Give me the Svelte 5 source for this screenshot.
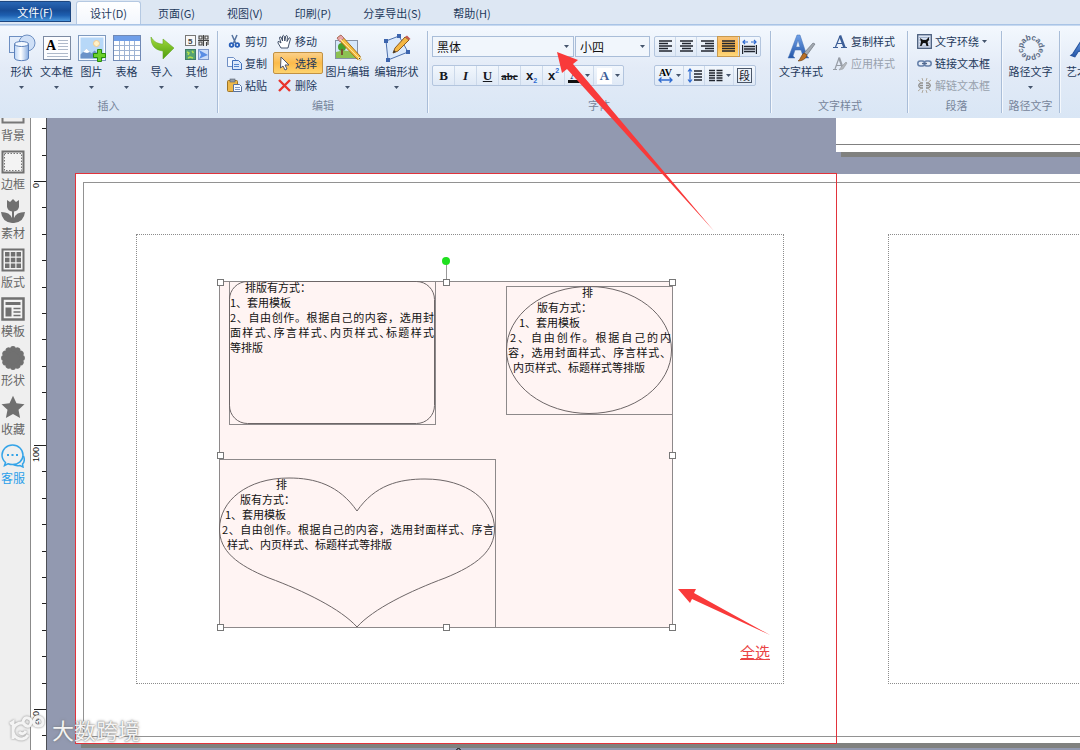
<script>
  const tabs = ['页面(G)', '视图(V)', '印刷(P)', '分享导出(S)', '帮助(H)'];

  const insertItems = [
    { id: 'shape', label: '形状' },
    { id: 'textbox', label: '文本框' },
    { id: 'picture', label: '图片' },
    { id: 'table', label: '表格' },
    { id: 'import', label: '导入' },
    { id: 'other', label: '其他' }
  ];

  const sideItems = [
    { id: 'background', label: '背景' },
    { id: 'border', label: '边框' },
    { id: 'material', label: '素材' },
    { id: 'layout', label: '版式' },
    { id: 'template', label: '模板' },
    { id: 'badge', label: '形状' },
    { id: 'star', label: '收藏' },
    { id: 'service', label: '客服', accent: true }
  ];

  // Ruler: one tick every 10 mm, a long one with a number every 100 mm.
  let rulerHeight = $state(632);
  const ticks = $derived(
    Array.from({ length: Math.ceil(rulerHeight / 26.4) }, (_, i) => {
      const n = i - 2;
      return { y: Math.round(63 + n * 26.4), major: n % 10 === 0, value: n * 10 };
    })
  );

  const handles = [
    [0, 0], [50, 0], [100, 0],
    [0, 50], [100, 50],
    [0, 100], [50, 100], [100, 100]
  ];

  const blocks = [
    {
      kind: 'rounded',
      lines: [
        { text: '排版有方式：', indent: 15 },
        { text: '1、套用模板', indent: 0 },
        { text: '2、自由创作。根据自己的内容，选用封', indent: 0, fill: true },
        { text: '面样式、序言样式、内页样式、标题样式', indent: 0, fill: true, tight: true },
        { text: '等排版', indent: 0 }
      ]
    },
    {
      kind: 'ellipse',
      lines: [
        { text: '排', indent: 75 },
        { text: '版有方式：', indent: 30 },
        { text: '1、套用模板', indent: 12 },
        { text: '2、自由创作。根据自己的内', indent: 3, fill: true },
        { text: '容，选用封面样式、序言样式、', indent: 1, fill: true },
        { text: '内页样式、标题样式等排版', indent: 6 }
      ]
    },
    {
      kind: 'heart',
      lines: [
        { text: '排', indent: 56 },
        { text: '版有方式：', indent: 20 },
        { text: '1、套用模板', indent: 5 },
        { text: '2、自由创作。根据自己的内容，选用封面样式、序言', indent: 2, fill: true },
        { text: '样式、内页样式、标题样式等排版', indent: 7 }
      ]
    }
  ];

  const ringLetters = 'abcadecpdecp'.split('');
  const petals = Array.from({ length: 12 }, (_, i) => i * 30);
</script>

{#snippet caret()}
  <svg class="caret" viewBox="0 0 5 3" aria-hidden="true"><path d="M0 0h5L2.500 3z" fill="#44546c" /></svg>
{/snippet}

{#snippet bigIcon(id)}
  <svg class="big-icon" viewBox="0 0 28 28" aria-hidden="true">
    <defs>
      <linearGradient id="glass" x1="0" x2="1"><stop offset="0" stop-color="#b9d3f5" /><stop offset=".45" stop-color="#fff" /><stop offset="1" stop-color="#86abe0" /></linearGradient>
      <linearGradient id="leaf" x2="0" y2="1"><stop stop-color="#a5dc3c" /><stop offset="1" stop-color="#4b9c0d" /></linearGradient>
      <linearGradient id="glyph" x2="0" y2="1"><stop stop-color="#6fa0e8" /><stop offset="1" stop-color="#2456a8" /></linearGradient>
    </defs>
    {#if id === 'shape'}
      <rect x="1.500" y="2.500" width="15" height="16" fill="#e3edfb" stroke="#6d8fc2" />
      <circle cx="19" cy="9" r="8" fill="#cfe0f7" stroke="#6d8fc2" />
      <path d="M6.500 10v14c0 3.500 14 3.500 14 0V10z" fill="url(#glass)" stroke="#5d82bb" />
      <ellipse cx="13.500" cy="10" rx="7" ry="2.500" fill="#f4f9ff" stroke="#5d82bb" />
    {:else if id === 'textbox'}
      <rect x=".5" y="2.500" width="27" height="23" fill="#fcfdff" stroke="#7c8ba3" />
      <text x="3" y="16" font-family="Liberation Serif" font-weight="bold" font-size="14">A</text>
      <path d="M15 6.500h10M15 9.500h10M15 12.500h10M15 15.500h10M4 19.500h21M4 22.500h21" stroke="#aeb9ca" />
    {:else if id === 'picture'}
      <rect x=".5" y="1.500" width="27" height="25" fill="#f8fbff" stroke="#7f9abf" />
      <rect x="2.500" y="3.500" width="23" height="21" fill="#b7d8f8" />
      <circle cx="18.500" cy="9.500" r="3" fill="#fff1c7" stroke="#f3c98b" />
      <path d="M2.500 24.500v-4l6-6 5 5 3-3 9 8z" fill="#6c93c8" />
      <path d="M5 18l3.500-3.500L12 18l-3 1z" fill="#fff" />
      <path d="M19.500 15.500h4v4h4v4h-4v4h-4v-4h-4v-4h4z" fill="#6bd02b" stroke="#298b0b" />
    {:else if id === 'table'}
      <rect x=".5" y="1.500" width="27" height="25" fill="#fff" stroke="#7089b5" />
      <rect x="1" y="2" width="26" height="5" fill="#6f9ee8" />
      <path d="M1 11.500h26M1 16.500h26M1 21.500h26M6.500 7v19M11.500 7v19M16.500 7v19M21.500 7v19" stroke="#9eb3d3" />
    {:else if id === 'import'}
      <path d="M3 4C3 13 7 17 15 18v8l11-11L15 6v5C10 11 6 9 3 4z" transform="translate(0 -1)" fill="url(#leaf)" stroke="#67a92a" stroke-width=".6" />
    {:else if id === 'other'}
      <rect x="2.500" y="1.500" width="10" height="10" fill="#f8f8f8" stroke="#777" />
      <text x="5" y="10" font-family="Liberation Sans" font-weight="bold" font-size="8" fill="#444">5</text>
      <rect x="15.500" y="1.500" width="10" height="10" fill="#f2f2f2" />
      <path d="M16 2h3v3h-3zM22 2h3v3h-3zM16 8h3v3h-3zM20.500 1v11M15 6.500h11M23.500 8v4M25 7v4" stroke="#444" stroke-width="1.100" fill="none" />
      <rect x="2.500" y="15.500" width="10" height="10" fill="#55a273" stroke="#3f7d68" />
      <path d="M4 18l2 1-1 2M9 17l1.500 2M5 24l2-1 3 1" stroke="#b3df4d" stroke-width="1.500" fill="none" />
      <rect x="15.500" y="15.500" width="10" height="10" fill="#cbdcf8" stroke="#7d97c8" />
      <path d="M16 16l9 5-5 2-4 2 2-4z" fill="#5a8de4" />
    {:else if id === 'edit-picture'}
      <rect x="1.500" y="6.500" width="22" height="18" fill="#d5e8fb" stroke="#8592a5" />
      <path d="M2 24V18q10-4 21 2v4z" fill="#8cc152" />
      <circle cx="8" cy="13" r="4" fill="#47a12e" /><path d="M8 15v6" stroke="#7a5230" stroke-width="2" />
      <path d="M3 4l4-3 19 21 1 4-4-1z" fill="#f6bf43" stroke="#a36e1c" />
      <path d="M3 4l4-3 3 3-4 4z" fill="#e8a5a8" stroke="#a6696b" stroke-width=".7" />
      <path d="M6 5l19 19M24 25l2-2 1 3z" stroke="#fbe4a0" fill="#333" />
    {:else if id === 'edit-shape'}
      <path d="M3 7l13-5 9 16-20 8z" fill="#dbe9fb" stroke="#4d70ad" />
      <path d="M1 5h4v4H1zM14 0h4v4h-4zM23 16h4v4h-4zM3 24h4v4H3z" fill="#3d65ae" />
      <path d="M22 3l4 3-11 11-5 2 2-5z" fill="#f4b744" stroke="#8a5b22" /><path d="M22 3l2-1.500L27.500 5 26 6z" fill="#c45a50" /><path d="M10 19l1-3 2 2z" fill="#333" />
    {:else if id === 'text-style'}
      <path d="M1 24l1-2 8-21h3l7 21 2 2H14l2-2-2-6H8l-2 6 2 2zM9 13h4l-2-7z" fill="url(#glyph)" stroke="#4470b2" stroke-width=".5" />
      <path d="M26 9l2 1-8 11-3-2z" fill="#a3a9b1" stroke="#5f6670" stroke-width=".6" /><path d="M17 19l3 2c-1 4-5 6-9 6 3-2 3-6 6-8z" fill="#b97025" stroke="#6b3e13" stroke-width=".6" />
    {:else if id === 'path-text'}
      {#each ringLetters as c, i}
        <text x="14" y="6" text-anchor="middle" font-family="Liberation Sans" font-weight="bold" font-size="8" fill="#5b6b84" transform="rotate({i * 30 - 45} 14 14)">{c}</text>
      {/each}
    {:else if id === 'word-art'}
      <path d="M1 20l2-1L15 4l8 17h-8l-1-4H9l-4 5z" transform="rotate(-6 14 14)" fill="url(#glyph)" stroke="#28549e" />
    {/if}
  </svg>
{/snippet}

{#snippet smallIcon(id)}
  <svg class="small-icon" viewBox="0 0 15 15" aria-hidden="true">
    {#if id === 'cut'}
      <path d="M5 1l3.500 8M10 1L6.500 9" stroke="#56739f" stroke-width="1.500" fill="none" />
      <circle cx="4.500" cy="11" r="1.800" fill="none" stroke="#285fb9" stroke-width="1.800" /><circle cx="10.300" cy="11" r="1.800" fill="none" stroke="#285fb9" stroke-width="1.800" />
    {:else if id === 'copy'}
      <path d="M.5 1.500h6l2 2v7h-8z" fill="#f2f7ff" stroke="#6f8fc4" /><path d="M5.500 4.500h6l3 3v6h-9z" fill="#dbe8fb" stroke="#3f6db8" /><path d="M7 8.500h5M7 10.500h5" stroke="#5686cf" />
    {:else if id === 'paste'}
      <rect x=".5" y="2.500" width="10" height="11" rx="1" fill="#edb84b" stroke="#9d7426" /><rect x="3" y="1" width="5" height="3" fill="#8f99a8" stroke="#59616c" stroke-width=".6" /><path d="M6.500 6.500h6l2 2v5h-8z" fill="#f5f9ff" stroke="#56719e" /><path d="M8 9.500h5M8 11.500h5" stroke="#7f9bc7" />
    {:else if id === 'hand'}
      <path d="M4 14L1 9q-.5-2 1-1.500L4 9 2.500 4q0-1.500 1.500-1l1.500 4L5.500 2q.7-1.500 1.700 0l.6 5 1-5q1-1.200 1.700.3L10 7.500l2-3.500q1.300-.7 1.500.7L12 10l-1 4z" fill="#fff" stroke="#33435e" stroke-width=".9" />
    {:else if id === 'pointer'}
      <path d="M4 1l8 8H8l2 4-2 1-2-4-2.500 2z" fill="#fff" stroke="#4e566b" />
    {:else if id === 'delete'}
      <path d="M2 2l11 11M13 2L2 13" stroke="#e9352d" stroke-width="2.400" />
    {:else if id === 'copy-style'}
      <path d="M0 13.500h5M8 13.500h6M2.500 13L7 2M4.500 9.500h6" stroke="#3c5e97" stroke-width="1.200" fill="none" /><path d="M7 1.500l4.500 12" stroke="#3c5e97" stroke-width="2.400" />
    {:else if id === 'apply-style'}
      <path d="M0 13.500h4M2 13L6 2M3.500 9.500h5" stroke="#979da6" stroke-width="1.200" fill="none" /><path d="M6 1.500l3.500 10" stroke="#979da6" stroke-width="2.200" /><path d="M13 6l1 1-4 6-4 1 3-4z" fill="#b3b7bc" stroke="#969b9f" stroke-width=".6" />
    {:else if id === 'wrap'}
      <rect x=".7" y=".7" width="13.600" height="13.600" fill="#dae4f3" stroke="#4a5d7d" stroke-width="1.300" /><path d="M2 3.500h11M2 6h11M2 9h11M2 12h11" stroke="#8c9fbd" stroke-width=".7" /><path d="M3 4l3 2h3l3-3v3l-1.500 2 1 4h-2l-1-3H6l-1.500 3H3l1-4z" fill="#111" />
    {:else if id === 'link'}
      <rect x=".8" y="5" width="7" height="5" rx="2.500" fill="none" stroke="#647fa9" stroke-width="1.500" /><rect x="7.200" y="5" width="7" height="5" rx="2.500" fill="none" stroke="#647fa9" stroke-width="1.500" /><path d="M5 7.500h5" stroke="#52698e" stroke-width="1.300" />
    {:else if id === 'unlink'}
      <path d="M6 5H3.500q-3.500 2.500 0 5H6M9 5h2.500q3.500 2.500 0 5H9M3 7.500h3M9 7.500h3" stroke="#8f8e8c" stroke-width="1.400" fill="none" /><path d="M5 0l1 3M10 0L9 3M5 15l1-3M10 15l-1-3M1 2l2.500 2M14 2l-2.500 2M1 13l2.500-2M14 13l-2.500-2" stroke="#b0a99c" fill="none" />
    {/if}
  </svg>
{/snippet}

{#snippet big(id, label, drop = true)}
  <button class="big">{@render bigIcon(id)}<span>{label}</span>{#if drop}{@render caret()}{/if}</button>
{/snippet}

{#snippet small(id, label, cls = '', drop = false)}
  <button class="small {cls}">{@render smallIcon(id)}<span>{label}</span>{#if drop}{@render caret()}{/if}</button>
{/snippet}

{#snippet lines(d, blue = '')}
  <svg class="tool-icon" viewBox="0 0 15 15" aria-hidden="true"><path {d} stroke="#20252e" stroke-width="1.400" fill="none" />{#if blue}<path d={blue} stroke="#2f6bd0" stroke-width="1.200" fill="none" />{/if}</svg>
{/snippet}

<div class="window">
  <nav class="tabs">
    <button class="tab file">文件(F)</button>
    <button class="tab active">设计(D)</button>
    {#each tabs as t}<button class="tab">{t}</button>{/each}
  </nav>

  <div class="ribbon">
    <section class="group insert">
      <div class="tools">{#each insertItems as it}{@render big(it.id, it.label)}{/each}</div>
      <h2>插入</h2>
    </section>
    <section class="group edit">
      <div class="tools">
        <div class="stack">{@render small('cut', '剪切')}{@render small('copy', '复制')}{@render small('paste', '粘贴')}</div>
        <div class="stack">{@render small('hand', '移动')}{@render small('pointer', '选择', 'on')}{@render small('delete', '删除')}</div>
        {@render big('edit-picture', '图片编辑')}{@render big('edit-shape', '编辑形状')}
      </div>
      <h2>编辑</h2>
    </section>
    <section class="group font">
      <div class="tools">
        <div class="rows">
          <div class="row">
            <span class="pick name"><select aria-label="字体"><option>黑体</option></select>{@render caret()}</span>
            <span class="pick size"><select aria-label="字号"><option>小四</option></select>{@render caret()}</span>
          </div>
          <div class="strip">
            <button class="b">B</button><button class="i">I</button><button class="u">U</button><button class="s">abc</button>
            <button class="x">x<sub>2</sub></button><button class="x">x<sup>2</sup></button>
            <button class="wide"><span class="ink">A</span>{@render caret()}</button>
            <button class="wide"><span class="plate">A</span>{@render caret()}</button>
          </div>
        </div>
        <div class="rows narrow">
          <div class="strip">
            <button aria-label="左对齐">{@render lines('M1 2h13M1 4.500h9M1 7h13M1 9.500h9M1 12h13')}</button>
            <button aria-label="居中">{@render lines('M1 2h13M3 4.500h9M1 7h13M3 9.500h9M1 12h13')}</button>
            <button aria-label="右对齐">{@render lines('M1 2h13M5 4.500h9M1 7h13M5 9.500h9M1 12h13')}</button>
            <button class="on" aria-label="两端对齐">{@render lines('M1 2h13M1 4.500h13M1 7h13M1 9.500h13M1 12h13')}</button>
            <button aria-label="分散对齐">{@render lines('M.5 6v9M14.500 6v9M2 7.500h11M2 10h11M2 12.500h11', 'M1 3h5M3 1L1 3l2 2M9 3h5M12 1l2 2-2 2')}</button>
          </div>
          <div class="strip">
            <button class="wide"><svg class="tool-icon" viewBox="0 0 15 15" aria-hidden="true"><text x="7.500" y="8" text-anchor="middle" font-family="Liberation Serif" font-weight="bold" font-size="10">AV</text><path d="M1 12h13M3.500 9.500L1 12l2.500 2.500M11.500 9.500L14 12l-2.500 2.500" stroke="#2f6bd0" stroke-width="1.300" fill="none" /></svg>{@render caret()}</button>
            <button aria-label="行距">{@render lines('M7 3h8M7 6h8M7 9h8M7 12h8', 'M3 1v13M1 3.500L3 1l2 2.500M1 11.500L3 14l2-2.500')}</button>
            <button class="wide" aria-label="分栏">{@render lines('M1 2.500h6M1 5h6M1 7.500h6M1 10h6M1 12.500h6M8.500 2.500h6M8.500 5h6M8.500 7.500h6M8.500 10h6M8.500 12.500h6')}{@render caret()}</button>
            <button><span class="para">段</span></button>
          </div>
        </div>
      </div>
      <h2>字体</h2>
    </section>
    <section class="group style">
      <div class="tools">
        {@render big('text-style', '文字样式', false)}
        <div class="stack">{@render small('copy-style', '复制样式')}{@render small('apply-style', '应用样式', 'off')}</div>
      </div>
      <h2>文字样式</h2>
    </section>
    <section class="group paragraph">
      <div class="tools">
        <div class="stack">{@render small('wrap', '文字环绕', '', true)}{@render small('link', '链接文本框')}{@render small('unlink', '解链文本框', 'off')}</div>
      </div>
      <h2>段落</h2>
    </section>
    <section class="group path">
      <div class="tools">{@render big('path-text', '路径文字')}</div>
      <h2>路径文字</h2>
    </section>
    <section class="group art">
      <div class="tools">{@render big('word-art', '艺术字', false)}</div>
    </section>
  </div>

  <div class="body">
    <aside class="side">
      {#each sideItems as it}
        <button class:accent={it.accent}>
          <svg viewBox="0 0 24 24" aria-hidden="true">
            {#if it.id === 'background'}
              <rect x="1.500" y="1.500" width="21" height="20" fill="none" stroke="#777" stroke-width="2" />
            {:else if it.id === 'border'}
              <rect x="1.500" y="1.500" width="21" height="21" fill="#f3f3f3" stroke="#707070" stroke-width="2" /><rect x="3.500" y="3.500" width="17" height="17" fill="none" stroke="#777" stroke-dasharray="1.500 1.500" />
            {:else if it.id === 'material'}
              <path d="M6 1l3 2 3-3 3 3 3-2v7q-1 4-5 4.500V19q2-6 11-6-1 10-11 11h-2Q1 23 0 13q9 0 11 6v-6.500Q7 12 6 8z" fill="#707070" />
            {:else if it.id === 'layout'}
              <rect x="1.500" y="1.500" width="21" height="21" fill="#f3f3f3" stroke="#707070" stroke-width="2" /><path d="M4 4h4.500v4.500H4zM9.800 4h4.500v4.500H9.800zM15.500 4H20v4.500h-4.500zM4 9.800h4.500v4.500H4zM9.800 9.800h4.500v4.500H9.800zM15.500 9.800H20v4.500h-4.500zM4 15.500h4.500V20H4zM9.800 15.500h4.500V20H9.800zM15.500 15.500H20V20h-4.500z" fill="#707070" />
            {:else if it.id === 'template'}
              <rect x="1.500" y="1.500" width="21" height="21" fill="#f3f3f3" stroke="#707070" stroke-width="2.500" /><path d="M4.500 6.500h15" stroke="#707070" stroke-width="3" /><path d="M4.500 10.500h6v9h-6z" fill="#707070" /><path d="M12.500 11.500h7M12.500 15h7M12.500 18.500h7" stroke="#707070" stroke-width="1.700" />
            {:else if it.id === 'badge'}
              <circle cx="12" cy="12" r="10" fill="#707070" />
              {#each petals as a}<circle cx="12" cy="3" r="2.900" fill="#707070" transform="rotate({a} 12 12)" />{/each}
            {:else if it.id === 'star'}
              <path d="M12 .8l3.500 7.400 8 1-6 5.600 1.600 8.200-7.100-4-7.100 4 1.600-8.200-6-5.600 8-1z" fill="#707070" />
            {:else}
              <path d="M4.500 18.500l-1 3 3.500-1.700q2 .8 4.500.8C17.500 20.600 22 16.500 22 11S17.500 1 11.500 1 1 5.500 1 11q0 4.500 3.500 7.500z" fill="none" stroke="#35a4e8" stroke-width="1.500" /><path d="M22.500 12q2 5-1 8l.5 3-3-1.500q-4 1-7-1" fill="none" stroke="#35a4e8" stroke-width="1.500" /><path d="M6 10h2v2H6zM10.500 10h2v2h-2zM15 10h2v2h-2z" fill="#35a4e8" />
            {/if}
          </svg>
          <span>{it.label}</span>
        </button>
      {/each}
    </aside>

    <div class="ruler" bind:clientHeight={rulerHeight}>
      <svg aria-hidden="true">
        {#each ticks as t}
          <path d="M{t.major ? 3 : 11} {t.y + 0.5}H15" stroke="#222" />
          {#if t.major}<text transform="translate(8 {t.y + (t.value ? 17 : 7)}) rotate(-90)">{t.value}</text>{/if}
        {/each}
      </svg>
    </div>

    <main class="canvas">
      <div class="page upper"></div>
      <div class="page spread"></div>
      <div class="bleed"></div>
      <div class="outline"></div>
      <div class="guide first"></div>
      <div class="guide second"></div>

      <div class="selection">
        {#each blocks as b}
          <div class="block {b.kind}">
            <svg aria-hidden="true">
              {#if b.kind === 'rounded'}
                <rect x=".5" y=".5" width="205" height="142" rx="18" />
              {:else if b.kind === 'ellipse'}
                <ellipse cx="83" cy="64" rx="82.500" ry="63.500" />
              {:else}
                <path d="M138 52C120 26 96 19 70 19 28 19 .5 42 .5 70 .5 92 18 106 50 119 85 132 122 150 138 168 154 150 191 132 226 119 258 106 275.500 92 275.500 70 275.500 42 248 20 206 20 180 20 156 26 138 52z" />
              {/if}
            </svg>
            <div class="copy">
              {#each b.lines as l}<p class:fill={l.fill} class:tight={l.tight} style:padding-left="{l.indent}px">{l.text}</p>{/each}
            </div>
          </div>
        {/each}
        <div class="stem"></div>
        {#each handles as [x, y]}<i class="handle" style="left:{x}%;top:{y}%"></i>{/each}
      </div>

      <p class="note">全选</p>
      <i class="origin"></i>
    </main>
  </div>

  <svg class="arrows" aria-hidden="true">
    <path d="M557 52L578 60 573 64 714 231 567 69 562 73z" />
    <path d="M678 589L696 589 694 593 770 635 692 599 690 603z" />
  </svg>

  <div class="mark">
    <svg viewBox="0 0 38 28" aria-hidden="true"><path d="M2 9l3-2v17M17 9a8 8 0 1 0 3 11M11 17q4 4 7-1M15 7q1-5 5-4t3 5-4 3-3-3M26 6q1-5 5-4t4 5-5 4-4-5z" /></svg>
    <span>大数跨境</span>
  </div>
</div>

<style>
  :global(body) { margin: 0; }
  .window {
    position: relative;
    display: flex;
    flex-direction: column;
    height: 100vh;
    overflow: hidden;
    font: 11px/18px "Noto Sans CJK SC", sans-serif;
    color: #1e395b;
  }
  button { font: inherit; color: inherit; border: 0; padding: 0; margin: 0; background: none; }
  h2, p { margin: 0; font-weight: normal; }

  .tabs {
    display: flex;
    flex: none;
    height: 24px;
    background: #dde7f3;
    border-bottom: 1px solid #a9c4e6;
  }
  .tab { padding: 2px 16px 0; white-space: nowrap; line-height: 20px; }
  .tab.file {
    width: 71px;
    margin: 1px 5px 2px 0;
    padding: 0;
    color: #fff;
    border-radius: 0 2px 0 0;
    background: linear-gradient(#2a67b4, #174c96 45%, #1d5fb0 70%, #4c98dd);
    border: 1px solid #1c4680;
    border-left: 0;
    line-height: 18px;
  }
  .tab.active {
    margin: 1px 1px 0 0;
    padding: 0 13px;
    background: linear-gradient(#fff, #f3f7fd);
    border: 1px solid #b5c9e2;
    border-bottom: 0;
    border-radius: 3px 3px 0 0;
  }

  .ribbon {
    display: flex;
    flex: none;
    height: 82px;
    padding: 5px 0;
    overflow: hidden;
    background: linear-gradient(#f3f8fe, #e3ebf7 45%, #d9e6f5);
    border-top: 1px solid #c6d9f0;
  }
  .group {
    box-sizing: border-box;
    display: flex;
    flex-direction: column;
    flex: none;
    padding: 3px 4px 1px;
    border-right: 1px solid #a9bdd8;
    box-shadow: 1px 0 #f4f8fd;
  }
  .group h2 { font-size: 11px; line-height: 14px; text-align: center; color: #76849a; }
  .tools { display: flex; flex: 1; min-height: 0; }
  .insert { width: 218px; }
  .edit { width: 210px; padding-left: 5px; }
  .font { width: 343px; }
  .style { width: 137px; padding-left: 6px; }
  .paragraph { width: 94px; padding-left: 8px; }
  .path { width: 58px; }
  .art { width: 58px; padding-left: 5px; border: 0; }

  .big { display: flex; flex-direction: column; align-items: center; min-width: 35px; white-space: nowrap; }
  .big .caret { margin-top: 6px; }
  .big-icon { flex: none; width: 28px; height: 28px; overflow: visible; }
  .caret { flex: none; width: 5px; height: 3px; }
  .edit .big, .style .big, .path .big { width: 49px; }
  .stack { display: flex; flex-direction: column; margin-top: -4px; }
  .edit .stack { width: 50px; }
  .small {
    box-sizing: border-box;
    display: flex;
    align-items: center;
    gap: 3px;
    flex: none;
    height: 22px;
    padding: 0 3px;
    white-space: nowrap;
    border: 1px solid transparent;
  }
  .small-icon { width: 15px; height: 15px; flex: none; }
  .small.on { background: linear-gradient(#fbd08a, #fbbb4b 50%, #fdd46f); border-color: #c29243; border-radius: 2px; }
  .small.off { color: #98a1ad; }
  .style .small { padding: 0 7px; }
  .paragraph .small { padding: 0; }

  .rows { display: flex; flex-direction: column; gap: 8px; margin: 2px 4px 0 0; align-items: flex-start; }
  .row { display: flex; gap: 1px; }
  .pick { position: relative; display: flex; }
  .pick select {
    appearance: none;
    box-sizing: border-box;
    width: 100%;
    height: 21px;
    padding: 0 4px;
    border: 1px solid #a9bdd8;
    border-radius: 0;
    background: #f1f6fc;
    color: #111;
    font: 12px "Noto Sans CJK SC", sans-serif;
  }
  .pick .caret { position: absolute; right: 5px; top: 9px; }
  .name { width: 142px; }
  .size { width: 75px; }
  .strip {
    display: flex;
    box-sizing: border-box;
    height: 21px;
    border: 1px solid #b3c5de;
    border-radius: 2px;
    background: linear-gradient(#f2f7fd, #dfe9f6);
  }
  .strip button { box-sizing: border-box; display: flex; align-items: center; justify-content: center; width: 22px; border-right: 1px solid #ccd9ea; font: bold 13px "Liberation Serif", serif; color: #15181e; }
  .strip button:last-child { border-right: 0; }
  .narrow .strip button { width: 21px; }
  .strip .wide, .narrow .strip .wide { width: 29px; gap: 3px; }
  .strip .i { font-style: italic; }
  .strip .u { text-decoration: underline; }
  .strip .s { font-size: 11px; text-decoration: line-through; }
  .strip .x { font-family: "Liberation Sans", sans-serif; }
  .strip sub, .strip sup { font-size: 7px; color: #2f6bd0; align-self: flex-end; line-height: 9px; }
  .strip sup { align-self: flex-start; }
  .strip .on { background: linear-gradient(#f8c277, #fdb749 50%, #fdd97e); box-shadow: 0 0 0 1px #c89a50; }
  .ink { color: #36517d; border-bottom: 3px solid #111; line-height: 11px; padding: 0 2px; }
  .plate { background: #fff; color: #3c5e97; padding: 0 3px; }
  .para { border: 1px solid #4a5668; font: 11px/13px "Noto Sans CJK SC", sans-serif; padding: 0 1px; }
  .tool-icon { width: 15px; height: 15px; }

  .body { display: flex; flex: 1; min-height: 0; }
  .side {
    display: flex;
    flex-direction: column;
    flex: none;
    width: 30px;
    overflow: hidden;
    background: #efefef;
    color: #666;
  }
  .side button { display: flex; flex-direction: column; align-items: flex-start; flex: none; height: 49px; padding-left: 1px; font-size: 12px; line-height: 20px; white-space: nowrap; }
  .side button:first-child { margin-top: -17px; }
  .side svg { width: 24px; height: 24px; }
  .side .accent { color: #2ba0ea; }
  .ruler {
    flex: none;
    width: 15px;
    overflow: hidden;
    background: #fff;
    border-left: 1px solid #8b8b8b;
    border-right: 1px solid #4d4f55;
  }
  .ruler svg { display: block; width: 100%; height: 100%; }
  .ruler text { font: 9px "Liberation Sans", sans-serif; fill: #111; }

  .canvas { position: relative; flex: 1; overflow: hidden; background: #9299b0; }
  .canvas > *, .block, .handle, .stem { position: absolute; box-sizing: border-box; }
  .page { background: #fff; box-shadow: 5px 5px 0 #80817f; }
  .upper { left: 789px; right: -9px; top: 0; height: 34px; }
  .upper::after { content: ""; display: block; height: 26px; border-bottom: 1px solid #808080; }
  .spread { left: 29px; right: -9px; top: 56px; bottom: 7px; }
  .bleed { left: 36px; right: -9px; top: 64px; bottom: 13px; border: 1px solid #929292; }
  .outline { left: 28px; width: 762px; top: 55px; bottom: 6px; border: 1px solid #e2333b; }
  .guide { top: 116px; height: 450px; border: 1px dotted #8c8c8c; }
  .first { left: 89px; width: 648px; }
  .second { left: 841px; right: -9px; }

  .selection { left: 172px; top: 163px; width: 454px; height: 347px; border: 1px solid #8d898a; background: #fff4f3; }
  .block { border: 1px solid #8d898a; color: #111; }
  .block svg { position: absolute; left: -1px; top: -1px; width: 100%; height: 100%; overflow: visible; fill: none; stroke: #6d6667; }
  .rounded { left: 9px; top: -1px; width: 207px; height: 144px; }
  .ellipse { left: 286px; top: 4px; width: 167px; height: 129px; }
  .heart { left: -1px; top: 177px; width: 277px; height: 169px; }
  .copy { position: relative; line-height: 15px; white-space: nowrap; padding-right: 1px; }
  .rounded .copy, .ellipse .copy { margin-top: -2px; }
  .heart .copy { padding-top: 17px; }
  .fill { text-align: justify; text-align-last: justify; }
  .tight { font-feature-settings: "halt"; }
  .handle { width: 7px; height: 7px; margin: -3px; background: #fff; border: 1px solid #777; }
  .stem { left: 226px; top: -25px; height: 25px; border-left: 1px solid #999; }
  .stem::before { content: ""; position: absolute; left: -5px; top: 0; width: 8px; height: 8px; border-radius: 50%; background: #1fe01f; }
  .note { left: 693px; top: 523px; font-size: 15px; line-height: 22px; color: #ea4445; text-decoration: underline; }
  .origin { left: 409px; bottom: -3px; width: 5px; height: 5px; border: 1px solid #111; border-radius: 50%; }

  .arrows { position: absolute; inset: 0; width: 100%; height: 100%; pointer-events: none; fill: #f93a3a; }
  .mark {
    position: absolute;
    left: 8px;
    bottom: 5px;
    display: flex;
    align-items: center;
    gap: 6px;
    color: #f4f4f4;
    font-size: 22px;
    line-height: 32px;
    text-shadow: 0 0 3px #777, 0 0 1px #888;
  }
  .mark svg { width: 38px; height: 28px; fill: none; stroke: #f4f4f4; stroke-width: 3; filter: drop-shadow(0 0 1px #888); }
</style>
